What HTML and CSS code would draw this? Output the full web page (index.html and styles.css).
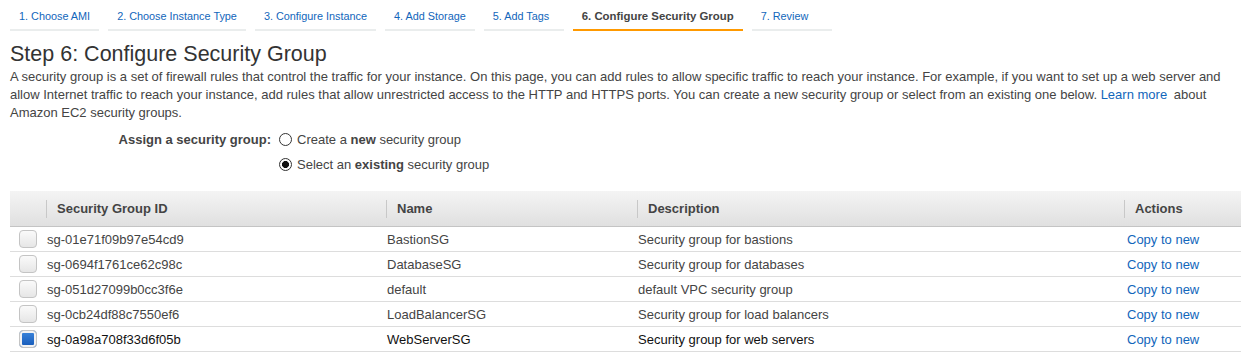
FILE: index.html
```html
<!DOCTYPE html>
<html lang="en">
<head>
<meta charset="UTF-8">
<title>Step 6: Configure Security Group</title>
<link rel="stylesheet" href="styles.css">
</head>
<body>
<div class="page">

<ul class="steps">
	<li><a href="#">1. Choose AMI</a></li>
	<li><a href="#">2. Choose Instance Type</a></li>
	<li><a href="#">3. Configure Instance</a></li>
	<li><a href="#">4. Add Storage</a></li>
	<li><a href="#">5. Add Tags</a></li>
	<li class="active"><a href="#">6. Configure Security Group</a></li>
	<li><a href="#">7. Review</a></li>
</ul>

<h1>Step 6: Configure Security Group</h1>
<p class="intro">A security group is a set of firewall rules that control the traffic for your instance. On this page, you can add rules to allow specific traffic to reach your instance. For example, if you want to set up a web server and allow Internet traffic to reach your instance, add rules that allow unrestricted access to the HTTP and HTTPS ports. You can create a new security group or select from an existing one below. <a href="#" class="learn">Learn more</a> about Amazon EC2 security groups.</p>

<div class="assign">
	<div class="assign-label">Assign a security group:</div>
	<div class="assign-options">
		<label class="option"><input type="radio" name="sg" class="radio"> <span>Create a <b>new</b> security group</span></label>
		<label class="option"><input type="radio" name="sg" class="radio" checked> <span>Select an <b>existing</b> security group</span></label>
	</div>
</div>

<table class="groups">
	<colgroup>
		<col style="width: 36px">
		<col style="width: 340px">
		<col style="width: 251px">
		<col style="width: 487px">
		<col>
	</colgroup>
	<thead>
		<tr>
			<th></th>
			<th><span>Security Group ID</span></th>
			<th><span>Name</span></th>
			<th><span>Description</span></th>
			<th><span>Actions</span></th>
		</tr>
	</thead>
	<tbody>
		<tr>
			<td><span class="check"></span></td>
			<td>sg-01e71f09b97e54cd9</td>
			<td>BastionSG</td>
			<td>Security group for bastions</td>
			<td><a href="#">Copy to new</a></td>
		</tr>
		<tr>
			<td><span class="check"></span></td>
			<td>sg-0694f1761ce62c98c</td>
			<td>DatabaseSG</td>
			<td>Security group for databases</td>
			<td><a href="#">Copy to new</a></td>
		</tr>
		<tr>
			<td><span class="check"></span></td>
			<td>sg-051d27099b0cc3f6e</td>
			<td>default</td>
			<td>default VPC security group</td>
			<td><a href="#">Copy to new</a></td>
		</tr>
		<tr>
			<td><span class="check"></span></td>
			<td>sg-0cb24df88c7550ef6</td>
			<td>LoadBalancerSG</td>
			<td>Security group for load balancers</td>
			<td><a href="#">Copy to new</a></td>
		</tr>
		<tr class="selected">
			<td><span class="check checked"></span></td>
			<td>sg-0a98a708f33d6f05b</td>
			<td>WebServerSG</td>
			<td>Security group for web servers</td>
			<td><a href="#">Copy to new</a></td>
		</tr>
	</tbody>
</table>

</div>
</body>
</html>
```

FILE: styles.css
```css
body {
	margin: 0;
	background: #fff;
	font-family: "Liberation Sans", Arial, sans-serif;
	font-size: 13px;
	color: #444;
}
a {
	color: #1166bb;
	text-decoration: none;
}
.page {
	padding: 0 4px 0 10px;
}

.steps {
	display: flex;
	gap: 9px;
	margin: 0;
	padding: 0;
	list-style: none;
}
.steps li {
	box-sizing: border-box;
	min-width: 80px;
	padding: 10px 9px 6px;
	border-bottom: 2px solid #eaeded;
	font-size: 10.85px;
	line-height: 13px;
}
.steps li.active {
	border-bottom-color: #f90;
}
.steps li.active a {
	color: #444;
	font-weight: bold;
	font-size: 11.4px;
}

h1 {
	margin: 11px 0 0;
	font-size: 21.5px;
	line-height: 25px;
	font-weight: normal;
	color: #333;
}
.intro {
	margin: 1px 0 0;
	line-height: 18px;
}
.learn {
	margin-right: 3px;
}

.assign {
	display: flex;
	margin-top: 5px;
}
.assign-label {
	width: 261px;
	line-height: 25px;
	text-align: right;
	font-weight: bold;
}
.assign-options {
	display: flex;
	flex-direction: column;
	margin-left: 8px;
}
.option {
	display: flex;
	align-items: center;
	gap: 5px;
	height: 25px;
}
.radio {
	appearance: none;
	margin: 0;
	width: 13px;
	height: 13px;
	border: 1px solid #333;
	border-radius: 50%;
	background: #fff;
}
.radio:checked {
	background: radial-gradient(circle, #111 0, #111 3.2px, #fff 3.8px);
}

.groups {
	width: 1231px;
	margin-top: 14px;
	border-collapse: collapse;
	table-layout: fixed;
}
.groups th {
	height: 35px;
	padding: 0;
	background: linear-gradient(#f4f4f4, #e0e0e0);
	border-bottom: 1px solid #c4c4c4;
	text-align: left;
}
.groups th span {
	display: block;
	padding: 1px 0 1px 10px;
	border-left: 1px solid #c8c8c8;
	line-height: 16px;
	color: #444;
}
.groups td {
	height: 24px;
	padding: 0 0 0 1px;
	border-bottom: 1px solid #ddd;
	white-space: nowrap;
}
.groups td:first-child {
	padding-left: 9px;
}
.groups td:last-child {
	padding-left: 3px;
}
.groups tr.selected td {
	color: #111;
}
.check {
	display: block;
	box-sizing: border-box;
	width: 18px;
	height: 18px;
	border: 1px solid #c4c4c4;
	border-radius: 4px;
	background: linear-gradient(#fafafa, #e6e6e6);
}
.check.checked {
	background: linear-gradient(#3c86dc, #1559b8);
	box-shadow: inset 0 0 0 2px #f2f2f2;
}
```
